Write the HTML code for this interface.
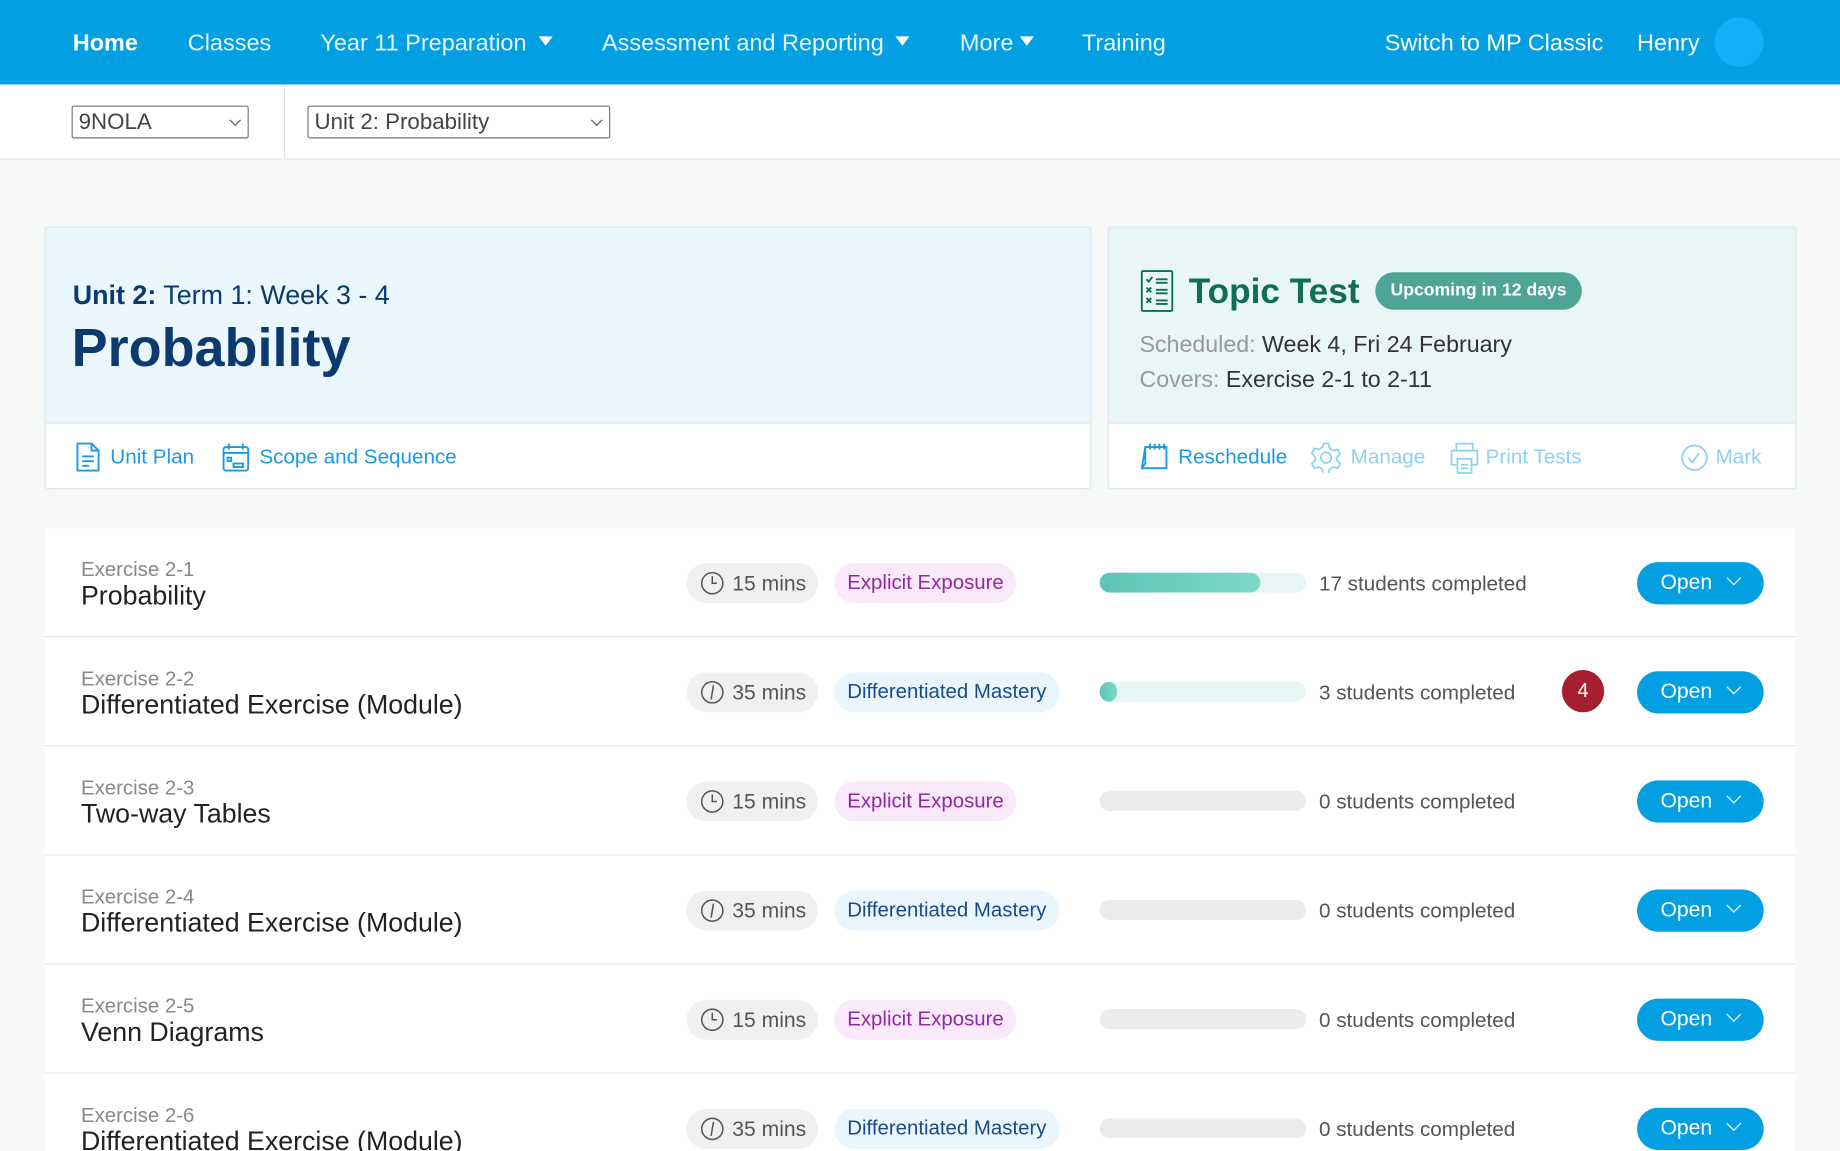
<!DOCTYPE html>
<html><head><meta charset="utf-8"><style>
html,body{margin:0;padding:0;width:1840px;height:1151px;overflow:hidden;background:#f7f8f8}
#w{position:absolute;left:0;top:0;width:1568px;height:981px;transform:scale(1.17347);transform-origin:0 0;font-family:"Liberation Sans",Arial,sans-serif;background:#f7f8f8;overflow:hidden}
.a{position:absolute;white-space:nowrap}
.nav{left:0;top:0;width:1568px;height:72px;background:#02a0e3}
.nl{top:26px;font-size:20px;color:#e6f6fd}
.tri{display:inline-block;width:0;height:0;border-left:6px solid transparent;border-right:6px solid transparent;border-top:8px solid #fff;margin-left:10px;vertical-align:4px}
.sel{height:28px;border:1px solid #777;border-radius:2px;background:#fff;font-size:19px;color:#444;line-height:28px;padding-left:5px;box-sizing:border-box}
.sel:after{content:"";position:absolute;right:7px;top:8px;width:6px;height:6px;border-right:1.3px solid #555;border-bottom:1.3px solid #555;transform:rotate(45deg)}
.card{border:1px solid #dde6ea;border-radius:3px;background:#fff;overflow:hidden;box-sizing:border-box}
.lk{font-size:17.6px;color:#1a9ae0}
.lk2{font-size:17.6px;color:#8fd0f2}
.row{left:38px;width:1492px;height:93px;background:#fff;border-bottom:1px solid #dfe6e9;box-sizing:border-box}
.ex{left:31px;top:25px;font-size:17.4px;color:#888}
.tt{left:31px;top:44px;font-size:22.8px;color:#222}
.time{left:547px;top:30px;width:112px;height:34px;border-radius:17px;background:#f0f0f0;font-size:18px;color:#555;line-height:34px}
.time svg{position:absolute;left:12px;top:7px}
.time span{position:absolute;left:39px}
.tag{top:30px;height:34px;border-radius:17px;font-size:17.4px;line-height:33px;padding:0 11px;left:673px}
.ee{background:#fae9fb;color:#9227a6}
.dm{background:#e9f6fd;color:#1c4a86}
.bar{left:899px;top:38px;width:176px;height:17px;border-radius:9px;background:#ececec;overflow:hidden}
.bar.t{background:#e7f6f5}
.fill{position:absolute;left:0;top:0;height:17px;border-radius:9px;background:linear-gradient(90deg,#5ec4b5,#7dd8cb)}
.sc{left:1086px;top:37px;font-size:17.6px;color:#555}
.open{left:1357px;top:29px;width:108px;height:36px;border-radius:18px;background:#02a0e3;color:#fff;font-size:18px;line-height:35px}
.open span{position:absolute;left:20px}
.open i{position:absolute;left:78px;top:9px;width:8px;height:8px;border-right:1.6px solid #fff;border-bottom:1.6px solid #fff;transform:rotate(45deg)}
.red{left:1293px;top:28px;width:36px;height:36px;border-radius:18px;background:#a51f30;color:#fff;font-size:17px;text-align:center;line-height:36px}
</style></head><body><div id="w">
<div class="a nav"></div>
<div class="a nl" style="left:62px;font-weight:bold;color:#fff">Home</div>
<div class="a nl" style="left:160px">Classes</div>
<div class="a nl" style="left:273px">Year 11 Preparation<span class="tri"></span></div>
<div class="a nl" style="left:513px">Assessment and Reporting<span class="tri"></span></div>
<div class="a nl" style="left:818px">More<span class="tri" style="margin-left:5px"></span></div>
<div class="a nl" style="left:922px">Training</div>
<div class="a nl" style="left:1180px;color:#fff">Switch to MP Classic</div>
<div class="a nl" style="left:1395px;color:#fff">Henry</div>
<div class="a" style="left:1461px;top:15px;width:42px;height:42px;border-radius:21px;background:#12b0f6"></div>

<div class="a" style="left:0;top:72px;width:1568px;height:63px;background:#fff;border-bottom:1px solid #e2e2e2"></div>
<div class="a" style="left:242px;top:72px;width:1px;height:63px;background:#e2e2e2"></div>
<div class="a sel" style="left:61px;top:90px;width:151px">9NOLA</div>
<div class="a sel" style="left:262px;top:90px;width:258px">Unit 2: Probability</div>

<div class="a card" style="left:38px;top:193px;width:892px;height:224px">
 <div class="a" style="left:0;top:0;width:892px;height:166px;background:#eaf7fd;border-bottom:1px solid #dbe8ee"></div>
 <div class="a" style="left:23px;top:44px;font-size:22.9px;color:#0b3a6e"><b>Unit 2:</b> Term 1: Week 3 - 4</div>
 <div class="a" style="left:22px;top:75px;font-size:46px;font-weight:bold;color:#0b3a6e">Probability</div>
 <svg class="a" style="left:25px;top:182px" width="22" height="27" viewBox="0 0 22 27" fill="none" stroke="#1a9ae0" stroke-width="1.6"><path d="M2 2h12l6 6v17H2z M14 2v6h6"/><path d="M6 13h10M6 17h10M6 21h6"/></svg>
 <div class="a lk" style="left:55px;top:185px">Unit Plan</div>
 <svg class="a" style="left:150px;top:183px" width="24" height="26" viewBox="0 0 24 26" fill="none" stroke="#1a9ae0" stroke-width="1.6"><rect x="1.5" y="4" width="21" height="20" rx="2"/><path d="M1.5 9h21M6 1v5M18 1v5"/><rect x="5" y="13" width="3" height="3"/><rect x="10" y="18" width="8" height="3"/></svg>
 <div class="a lk" style="left:182px;top:185px">Scope and Sequence</div>
</div>

<div class="a card" style="left:944px;top:193px;width:587px;height:224px">
 <div class="a" style="left:0;top:0;width:587px;height:166px;background:#e8f6f5;border-bottom:1px solid #dbe8ea"></div>
 <svg class="a" style="left:27px;top:36px" width="28" height="36" viewBox="0 0 28 36" fill="none" stroke="#0f6e55" stroke-width="1.6"><rect x="1" y="1" width="26" height="34" rx="1"/><path d="M5 8l2 2 3-4M5 15l4 4M9 15l-4 4M5 24l4 4M9 24l-4 4M13 8h10M13 11h10M13 17h10M13 20h10M13 26h10M13 29h10"/></svg>
 <div class="a" style="left:68px;top:38px;font-size:30px;font-weight:bold;color:#0f6e55">Topic Test</div>
 <div class="a" style="left:227px;top:38px;width:176px;height:32px;border-radius:16px;background:#4ea597;color:#fff;font-weight:bold;font-size:15px;text-align:center;line-height:31px">Upcoming in 12 days</div>
 <div class="a" style="left:26px;top:89px;font-size:19.8px;color:#999">Scheduled: <span style="color:#333">Week 4, Fri 24 February</span></div>
 <div class="a" style="left:26px;top:119px;font-size:19.8px;color:#999">Covers: <span style="color:#333">Exercise 2-1 to 2-11</span></div>
 <svg class="a" style="left:27px;top:183px" width="24" height="25" viewBox="0 0 24 25" fill="none" stroke="#1a9ae0" stroke-width="1.6"><path d="M4 4h18v18H1z M4 4v14L1 22"/><path d="M8 1v5M12 1v5M16 1v5M20 1v5"/></svg>
 <div class="a lk" style="left:59px;top:185px">Reschedule</div>
 <svg class="a" style="left:172px;top:183px" width="26" height="26" viewBox="0 0 26 26" fill="none" stroke="#8fd0f2" stroke-width="1.5"><circle cx="13" cy="13" r="4.5"/><path d="M11 1h4l1 4 3 2 4-1 2 4-3 3v2l3 3-2 4-4-1-3 2-1 4h-4l-1-4-3-2-4 1-2-4 3-3v-2L1 9l2-4 4 1 3-2z"/></svg>
 <div class="a lk2" style="left:206px;top:185px">Manage</div>
 <svg class="a" style="left:290px;top:182px" width="26" height="28" viewBox="0 0 26 28" fill="none" stroke="#8fd0f2" stroke-width="1.5"><path d="M6 8V2h14v6M6 20H2V8h22v12h-4"/><rect x="7" y="15" width="12" height="12"/><path d="M10 20h6M10 23h6"/></svg>
 <div class="a lk2" style="left:321px;top:185px">Print Tests</div>
 <svg class="a" style="left:487px;top:184px" width="24" height="24" viewBox="0 0 24 24" fill="none" stroke="#8fd0f2" stroke-width="1.5"><circle cx="12" cy="12" r="10.5"/><path d="M7 12l3 4 6-8"/></svg>
 <div class="a lk2" style="left:517px;top:185px">Mark</div>
</div>

<div class="a" style="left:38px;top:450px;width:1492px;height:540px;border:1px solid #dfe6e9;box-sizing:border-box;background:#fff"></div>

<div class="a row" style="top:450px">
 <div class="a ex">Exercise 2-1</div><div class="a tt">Probability</div>
 <div class="a time"><svg width="20" height="20" viewBox="0 0 20 20" fill="none" stroke="#555" stroke-width="1.3"><circle cx="10" cy="10" r="9"/><path d="M10 4v6h4"/></svg><span>15 mins</span></div>
 <div class="a tag ee">Explicit Exposure</div>
 <div class="a bar t"><div class="fill" style="width:137px"></div></div>
 <div class="a sc">17 students completed</div>
 <div class="a open"><span>Open</span><i></i></div>
</div>
<div class="a row" style="top:543px">
 <div class="a ex">Exercise 2-2</div><div class="a tt">Differentiated Exercise (Module)</div>
 <div class="a time"><svg width="20" height="20" viewBox="0 0 20 20" fill="none" stroke="#555" stroke-width="1.3"><circle cx="10" cy="10" r="9"/><path d="M11 4l-2 12"/></svg><span>35 mins</span></div>
 <div class="a tag dm">Differentiated Mastery</div>
 <div class="a bar t"><div class="fill" style="width:15px"></div></div>
 <div class="a sc">3 students completed</div>
 <div class="a red">4</div>
 <div class="a open"><span>Open</span><i></i></div>
</div>
<div class="a row" style="top:636px">
 <div class="a ex">Exercise 2-3</div><div class="a tt">Two-way Tables</div>
 <div class="a time"><svg width="20" height="20" viewBox="0 0 20 20" fill="none" stroke="#555" stroke-width="1.3"><circle cx="10" cy="10" r="9"/><path d="M10 4v6h4"/></svg><span>15 mins</span></div>
 <div class="a tag ee">Explicit Exposure</div>
 <div class="a bar"></div>
 <div class="a sc">0 students completed</div>
 <div class="a open"><span>Open</span><i></i></div>
</div>
<div class="a row" style="top:729px">
 <div class="a ex">Exercise 2-4</div><div class="a tt">Differentiated Exercise (Module)</div>
 <div class="a time"><svg width="20" height="20" viewBox="0 0 20 20" fill="none" stroke="#555" stroke-width="1.3"><circle cx="10" cy="10" r="9"/><path d="M11 4l-2 12"/></svg><span>35 mins</span></div>
 <div class="a tag dm">Differentiated Mastery</div>
 <div class="a bar"></div>
 <div class="a sc">0 students completed</div>
 <div class="a open"><span>Open</span><i></i></div>
</div>
<div class="a row" style="top:822px">
 <div class="a ex">Exercise 2-5</div><div class="a tt">Venn Diagrams</div>
 <div class="a time"><svg width="20" height="20" viewBox="0 0 20 20" fill="none" stroke="#555" stroke-width="1.3"><circle cx="10" cy="10" r="9"/><path d="M10 4v6h4"/></svg><span>15 mins</span></div>
 <div class="a tag ee">Explicit Exposure</div>
 <div class="a bar"></div>
 <div class="a sc">0 students completed</div>
 <div class="a open"><span>Open</span><i></i></div>
</div>
<div class="a row" style="top:915px">
 <div class="a ex">Exercise 2-6</div><div class="a tt">Differentiated Exercise (Module)</div>
 <div class="a time"><svg width="20" height="20" viewBox="0 0 20 20" fill="none" stroke="#555" stroke-width="1.3"><circle cx="10" cy="10" r="9"/><path d="M11 4l-2 12"/></svg><span>35 mins</span></div>
 <div class="a tag dm">Differentiated Mastery</div>
 <div class="a bar"></div>
 <div class="a sc">0 students completed</div>
 <div class="a open"><span>Open</span><i></i></div>
</div>
</div></body></html>
